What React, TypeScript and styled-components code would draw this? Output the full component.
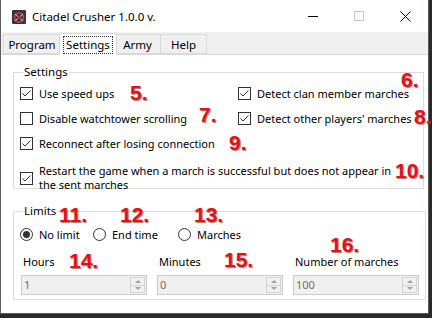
import styled, { createGlobalStyle } from "styled-components";

const GlobalStyle = createGlobalStyle`
  html, body {
    margin: 0;
    padding: 0;
    background: #2e2925;
  }
  body {
    font-family: "Noto Sans", "Segoe UI", sans-serif;
    font-size: 11px;
    color: #000;
  }
`;

const Window = styled.div`
    position: relative;
    box-sizing: border-box;
    width: 429px;
    height: 314px;
    background: #fff;
    border: 1px solid #5d5d5d;
    border-top: none;
    display: flex;
    flex-direction: column;
`;

const TitleBar = styled.div`
    height: 32px;
    display: flex;
    align-items: center;
    flex-shrink: 0;
`;

const AppIcon = styled.svg`
    margin-left: 11px;
    margin-right: 6px;
    margin-top: 2px;
`;

const Title = styled.div`
    flex: 1;
    font-size: 11.5px;
    margin-top: 1px;
`;

const Caption = styled.div`
    width: 46px;
    height: 32px;
    display: flex;
    align-items: center;
    justify-content: center;
`;

const TabStrip = styled.div`
    height: 22px;
    background: #f0f0f0;
    display: flex;
    align-items: flex-end;
    padding-left: 2px;
    border-bottom: 1px solid #d9d9d9;
    flex-shrink: 0;
`;

const Tab = styled.div<{ $active?: boolean; $w: number }>`
    box-sizing: border-box;
    width: ${(p) => p.$w}px;
    height: ${(p) => (p.$active ? 22 : 20)}px;
    margin: ${(p) => (p.$active ? "0 -2px -1px -2px" : "0")};
    background: ${(p) => (p.$active ? "#fff" : "#f0f0f0")};
    border: 1px solid #d9d9d9;
    border-bottom: ${(p) => (p.$active ? "none" : "1px solid #d9d9d9")};
    border-left-width: ${(p) => (p.$active ? "1px" : "0")};
    position: relative;
    z-index: ${(p) => (p.$active ? 1 : 0)};
    display: flex;
    align-items: center;
    justify-content: center;
    font-size: 11.5px;
    &:first-child {
        border-left-width: 1px;
    }
`;

const FocusRect = styled.span`
    border: 1px dotted #333;
    padding: 0 2px;
    line-height: 16px;
`;

const Panel = styled.div`
    flex: 1;
    padding: 9px 4px 0 12px;
    display: flex;
    flex-direction: column;
    gap: 14px;
`;

const Group = styled.fieldset<{ $pb: number }>`
    margin: 0;
    border: 1px solid #dcdcdc;
    padding: 1px 6px ${(p) => p.$pb}px 6px;
`;

const Legend = styled.legend`
    padding: 0 1px;
    margin-left: 3px;
    line-height: 16px;
    font-size: 11.5px;
`;

const CheckGrid = styled.div`
    display: grid;
    grid-template-columns: 218px 1fr;
    grid-auto-rows: 25px;
`;

const Row = styled.label<{ $span?: boolean; $tall?: boolean }>`
    display: flex;
    align-items: center;
    gap: 6px;
    white-space: nowrap;
    grid-column: ${(p) => (p.$span ? "1 / span 2" : "auto")};
    ${(p) => (p.$tall ? "height: 28px; margin-top: 8px; line-height: 14px;" : "")}
`;

const Box = styled.svg`
    flex-shrink: 0;
`;

const RadioRow = styled.div`
    display: flex;
    height: 25px;
    margin-top: 2px;
    align-items: center;
`;

const RadioItem = styled.label<{ $w: number }>`
    width: ${(p) => p.$w}px;
    display: flex;
    align-items: center;
    gap: 6px;
    white-space: nowrap;
`;

const FieldRow = styled.div`
    display: grid;
    grid-template-columns: 136px 136px 1fr;
    margin-top: 7px;
    padding-left: 1px;
`;

const Field = styled.div`
    display: flex;
    flex-direction: column;
`;

const FieldLabel = styled.div`
    height: 16px;
    line-height: 16px;
    padding-left: 2px;
    margin-bottom: 5px;
    white-space: nowrap;
`;

const Spin = styled.div`
    box-sizing: border-box;
    width: 126px;
    height: 20px;
    border: 1px solid #cccccc;
    background: #f0f0f0;
    display: flex;
`;

const SpinValue = styled.div`
    flex: 1;
    color: #6d6d6d;
    padding-left: 2px;
    line-height: 17px;
`;

const SpinButtons = styled.div`
    width: 16px;
    display: flex;
    flex-direction: column;
    padding: 1px 1px 1px 0;
    box-sizing: border-box;
`;

const SpinBtn = styled.div<{ $down?: boolean }>`
    flex: 1;
    border: 1px solid #d4d4d4;
    border-top-width: ${(p) => (p.$down ? 0 : 1)}px;
    background: #f0f0f0;
    display: flex;
    align-items: center;
    justify-content: center;
    &::after {
        content: "";
        border-left: 3px solid transparent;
        border-right: 3px solid transparent;
        ${(p) =>
            p.$down
                ? "border-top: 3px solid #a0a0a0;"
                : "border-bottom: 3px solid #a0a0a0;"}
    }
`;

const Mark = styled.span<{ $x: number; $y: number }>`
    position: absolute;
    left: ${(p) => p.$x}px;
    top: ${(p) => p.$y}px;
    font-family: "Liberation Sans", Arial, sans-serif;
    font-weight: bold;
    font-size: 21px;
    line-height: 1;
    color: #e3121a;
    text-shadow: 1px 1px 1px rgba(90, 0, 0, 0.55);
    pointer-events: none;
    z-index: 2;
`;

function CheckBox({ checked }: { checked?: boolean }) {
    return (
        <Box width="13" height="13" viewBox="0 0 13 13">
            <rect x="0.5" y="0.5" width="12" height="12" fill="#fff" stroke="#333" />
            {checked && <path d="M2.5 6.5 L5 9 L10.5 3.5" fill="none" stroke="#333" strokeWidth="1" />}
        </Box>
    );
}

function Radio({ checked }: { checked?: boolean }) {
    return (
        <Box width="13" height="13" viewBox="0 0 13 13">
            <circle cx="6.5" cy="6.5" r="6" fill="#fff" stroke="#333" />
            {checked && <circle cx="6.5" cy="6.5" r="3.5" fill="#333" />}
        </Box>
    );
}

function Spinner({ value }: { value: string }) {
    return (
        <Spin>
            <SpinValue>{value}</SpinValue>
            <SpinButtons>
                <SpinBtn />
                <SpinBtn $down />
            </SpinButtons>
        </Spin>
    );
}

const marks: [string, number, number][] = [
    ["5.", 129, 82],
    ["6.", 400, 69],
    ["7.", 198, 104],
    ["8.", 413, 106],
    ["9.", 228, 132],
    ["10.", 394, 160],
    ["11.", 58, 204],
    ["12.", 119, 204],
    ["13.", 193, 204],
    ["14.", 68, 250],
    ["15.", 223, 249],
    ["16.", 329, 234],
];

export default function App() {
    return (
        <>
            <GlobalStyle />
            <Window>
                <TitleBar>
                    <AppIcon width="14" height="14" viewBox="0 0 14 14">
                        <rect x="0" y="0" width="14" height="14" rx="1" fill="#3a3438" />
                        <circle cx="7" cy="7.5" r="4.5" fill="none" stroke="#c9404a" strokeWidth="1.6" />
                        <path d="M3 4 L11 11 M11 4 L3 11" stroke="#e8c8cc" strokeWidth="1" />
                        <circle cx="7" cy="7.5" r="1.6" fill="#b22a36" />
                    </AppIcon>
                    <Title>Citadel Crusher 1.0.0 v.</Title>
                    <Caption>
                        <svg width="10" height="10" viewBox="0 0 10 10">
                            <path d="M0 5.5 H10" stroke="#000" strokeWidth="1" />
                        </svg>
                    </Caption>
                    <Caption>
                        <svg width="10" height="10" viewBox="0 0 10 10">
                            <rect x="0.5" y="0.5" width="9" height="9" fill="none" stroke="#c4c4c4" />
                        </svg>
                    </Caption>
                    <Caption>
                        <svg width="11" height="11" viewBox="0 0 11 11">
                            <path d="M0.5 0.5 L10.5 10.5 M10.5 0.5 L0.5 10.5" stroke="#000" strokeWidth="1" />
                        </svg>
                    </Caption>
                </TitleBar>
                <TabStrip>
                    <Tab $w={58}>Program</Tab>
                    <Tab $w={58} $active>
                        <FocusRect>Settings</FocusRect>
                    </Tab>
                    <Tab $w={46}>Army</Tab>
                    <Tab $w={46}>Help</Tab>
                </TabStrip>
                <Panel>
                    <Group $pb={7}>
                        <Legend>Settings</Legend>
                        <CheckGrid>
                            <Row>
                                <CheckBox checked />
                                Use speed ups
                            </Row>
                            <Row>
                                <CheckBox checked />
                                Detect clan member marches
                            </Row>
                            <Row>
                                <CheckBox />
                                Disable watchtower scrolling
                            </Row>
                            <Row>
                                <CheckBox checked />
                                Detect other players' marches
                            </Row>
                            <Row $span>
                                <CheckBox checked />
                                Reconnect after losing connection
                            </Row>
                            <Row $span $tall>
                                <CheckBox checked />
                                <span>
                                    Restart the game when a march is successful but does not appear in
                                    <br />
                                    the sent marches
                                </span>
                            </Row>
                        </CheckGrid>
                    </Group>
                    <Group $pb={4}>
                        <Legend>Limits</Legend>
                        <RadioRow>
                            <RadioItem $w={73}>
                                <Radio checked />
                                No limit
                            </RadioItem>
                            <RadioItem $w={85}>
                                <Radio />
                                End time
                            </RadioItem>
                            <RadioItem $w={90}>
                                <Radio />
                                Marches
                            </RadioItem>
                        </RadioRow>
                        <FieldRow>
                            <Field>
                                <FieldLabel>Hours</FieldLabel>
                                <Spinner value="1" />
                            </Field>
                            <Field>
                                <FieldLabel>Minutes</FieldLabel>
                                <Spinner value="0" />
                            </Field>
                            <Field>
                                <FieldLabel>Number of marches</FieldLabel>
                                <Spinner value="100" />
                            </Field>
                        </FieldRow>
                    </Group>
                </Panel>
                {marks.map(([t, x, y]) => (
                    <Mark key={t} $x={x} $y={y}>
                        {t}
                    </Mark>
                ))}
            </Window>
        </>
    );
}
